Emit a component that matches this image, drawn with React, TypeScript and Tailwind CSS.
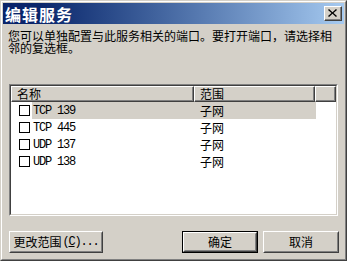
import React from "react";

const cjk = "font-['Noto_Sans_CJK_SC','Noto_Sans_CJK_JP',sans-serif]";
const mono = "font-mono tracking-[-1.2px]";

function Btn({ children, w, def }: { children: React.ReactNode; w: string; def?: boolean }) {
  const inner = (
    <div className="h-full w-full border border-t-white border-l-white border-r-[#404040] border-b-[#404040]">
      <div className="h-full w-full border border-t-[#D4D0C8] border-l-[#D4D0C8] border-r-[#808080] border-b-[#808080] flex items-center justify-center text-[12px] leading-[12px] text-black">
        {children}
      </div>
    </div>
  );
  return (
    <div className={`${w} h-[22px] ${def ? "border border-black" : ""}`}>{inner}</div>
  );
}

function Row({ name, scope, selected }: { name: string; scope: string; selected?: boolean }) {
  return (
    <div className="h-[17px] flex items-center">
      <div className="ml-[8px] w-[11px] h-[11px] border border-black bg-white shrink-0" />
      <div className={`ml-[2px] h-[17px] w-[284px] flex items-center ${selected ? "bg-[#D4D0C8]" : ""}`}>
        <div className={`w-[168px] pl-[1px] text-[12px] leading-[12px] text-black ${mono}`}>{name}</div>
        <div className="text-[12px] leading-[12px] text-black">{scope}</div>
      </div>
    </div>
  );
}

function HeaderCell({ label, w }: { label?: string; w: string }) {
  return (
    <div className={`${w} h-full border border-t-white border-l-white border-r-[#404040] border-b-[#404040] bg-[#D4D0C8]`}>
      <div className="h-full border-r border-b border-r-[#808080] border-b-[#808080] flex items-center pl-[5px] text-[12px] leading-[12px] text-black">
        {label}
      </div>
    </div>
  );
}

export default function App() {
  return (
    <div className={`w-[347px] h-[261px] bg-[#D4D0C8] ${cjk}`}>
      <div className="w-full h-full border border-t-[#D4D0C8] border-l-[#D4D0C8] border-r-[#404040] border-b-[#404040]">
        <div className="w-full h-full border border-t-white border-l-white border-r-[#808080] border-b-[#808080] p-[1px] flex flex-col">
          {/* title bar */}
          <div className="h-[21px] bg-linear-to-r from-[#0A246A] from-10% to-[#A6CAF0] flex items-center justify-between pl-[2px] pr-[2px]">
            <span className="text-white font-bold text-[16px] leading-[16px] tracking-[1px]">编辑服务</span>
            <div className="w-[18px] h-[15px] border border-t-white border-l-white border-r-[#404040] border-b-[#404040] bg-[#D4D0C8]">
              <div className="w-full h-full border-r border-b border-r-[#808080] border-b-[#808080] flex items-center justify-center">
                <svg width="9" height="8" viewBox="0 0 9 8">
                  <path d="M1 0 L4.5 3.3 L8 0 L9 1 L5.5 4 L9 7 L8 8 L4.5 4.7 L1 8 L0 7 L3.5 4 L0 1 Z" fill="#000" />
                </svg>
              </div>
            </div>
          </div>

          {/* description */}
          <div className="mt-[6px] ml-[5px] w-[330px] text-[12px] leading-[12px] text-black">
            您可以单独配置与此服务相关的端口。要打开端口，请选择相邻的复选框。
          </div>

          {/* list view */}
          <div className="mt-[30px] ml-[6px] w-[329px] h-[132px] border border-t-[#808080] border-l-[#808080] border-r-white border-b-white">
            <div className="w-full h-full border border-t-[#404040] border-l-[#404040] border-r-[#D4D0C8] border-b-[#D4D0C8] bg-white">
              <div className="h-[16px] flex">
                <HeaderCell label="名称" w="w-[183px]" />
                <HeaderCell label="范围" w="w-[121px]" />
                <HeaderCell w="flex-1" />
              </div>
              <Row name="TCP 139" scope="子网" selected />
              <Row name="TCP 445" scope="子网" />
              <Row name="UDP 137" scope="子网" />
              <Row name="UDP 138" scope="子网" />
            </div>
          </div>

          {/* buttons */}
          <div className="mt-[15px] ml-[6px] flex">
            <Btn w="w-[94px]">
              <span>更改范围</span>
              <span className={`${mono} ml-[1px]`}>(<span className="underline">C</span>)...</span>
            </Btn>
            <div className="ml-[79px]">
              <Btn w="w-[76px]" def>确定</Btn>
            </div>
            <div className="ml-[5px]">
              <Btn w="w-[76px]">取消</Btn>
            </div>
          </div>
        </div>
      </div>
    </div>
  );
}
